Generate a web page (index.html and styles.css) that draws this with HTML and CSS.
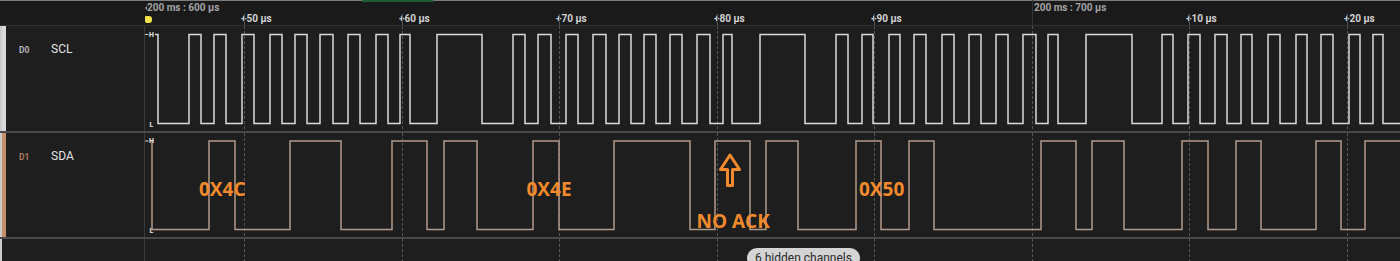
FILE: index.html
```html
<!DOCTYPE html>
<html lang="en">
<head>
  <meta charset="UTF-8" />
  <title>Logic - I2C capture</title>
  <link rel="stylesheet" href="styles.css">
</head>
<body>

<div class="viewer">

  <!-- Time ruler -->
  <div class="ruler-row">
    <div class="ruler-gutter"></div>
    <div class="ruler">
      <span class="tab-accent"></span>
      <span class="mark mark-prev">200 ms : 600 µs</span>
      <span class="cursor-flag"></span>
      <span class="tick" style="left:96px">+50 µs</span>
      <span class="tick" style="left:254px">+60 µs</span>
      <span class="tick" style="left:411px">+70 µs</span>
      <span class="tick" style="left:569px">+80 µs</span>
      <span class="tick" style="left:726px">+90 µs</span>
      <span class="mark mark-line" style="left:887px">200 ms : 700 µs</span>
      <span class="tick" style="left:1041px">+10 µs</span>
      <span class="tick" style="left:1199px">+20 µs</span>
    </div>
  </div>

  <!-- D0 / SCL -->
  <div class="channel channel-scl">
    <div class="channel-label">
      <span class="swatch"></span>
      <span class="ch-id">D0</span>
      <span class="ch-name">SCL</span>
    </div>
    <svg class="trace" width="1255" height="105" viewBox="145 26 1255 105">
      <path class="grid" d="M244.5 26V131M402.5 26V131M559.5 26V131M717.5 26V131M874.5 26V131M1032.5 26V131M1189.5 26V131M1347.5 26V131"/>
      <path class="level-dash" d="M145 34.5H148.5"/>
      <text class="level" x="149" y="36.5">H</text>
      <text class="level" x="149.5" y="126.5">L</text>
      <path class="wave wave-scl" d="M155 34.5H158V123.5H189V34.5H201V123.5H214V34.5H226V123.5H242V34.5H254V123.5H270V34.5H282V123.5H295V34.5H307V123.5H320V34.5H333V123.5H348V34.5H360V123.5H376V34.5H388V123.5H400V34.5H410V123.5H437V34.5H482V123.5H513V34.5H525V123.5H538V34.5H551V123.5H566V34.5H578V123.5H593V34.5H606V123.5H619V34.5H631V123.5H644V34.5H656V123.5H670V34.5H682V123.5H697V34.5H710V123.5H723V34.5H732V123.5H760V34.5H805V123.5H836V34.5H848V123.5H862V34.5H873V123.5H889V34.5H900V123.5H914V34.5H926V123.5H942V34.5H954V123.5H969V34.5H981V123.5H996V34.5H1008V123.5H1023V34.5H1036V123.5H1048V34.5H1058V123.5H1086V34.5H1132V123.5H1162V34.5H1173V123.5H1188V34.5H1200V123.5H1215V34.5H1227V123.5H1241V34.5H1252V123.5H1268V34.5H1280V123.5H1296V34.5H1307V123.5H1321V34.5H1333V123.5H1349V34.5H1360V123.5H1373V34.5H1383V123.5H1400"/>
    </svg>
  </div>

  <!-- D1 / SDA -->
  <div class="channel channel-sda">
    <div class="channel-label">
      <span class="swatch"></span>
      <span class="ch-id">D1</span>
      <span class="ch-name">SDA</span>
    </div>
    <svg class="trace" width="1255" height="104" viewBox="145 133 1255 104">
      <path class="grid" d="M244.5 133V237M402.5 133V237M559.5 133V237M717.5 133V237M874.5 133V237M1032.5 133V237M1189.5 133V237M1347.5 133V237"/>
      <path class="level-dash" d="M145 141H148.5"/>
      <path class="wave wave-sda" d="M152 141V229.5H209V141H235V229.5H290V141H341V229.5H392V141H427V229.5H444V141H477V229.5H533V141H559V229.5H614V141H690V229.5H715V141H750V229.5H766V141H798V229.5H856V141H881V229.5H909V141H934V229.5H1041V141H1076V229.5H1092V141H1124V229.5H1182V141H1208V229.5H1236V141H1261V229.5H1316V141H1341V229.5H1365V141H1400"/>
      <text class="level" x="149" y="142.7">H</text>
      <text class="level" x="149.5" y="232.5">L</text>

      <!-- decoded bytes -->
      <text class="note" x="199" y="195.5">0X4C</text>
      <text class="note" x="526.5" y="195.5">0X4E</text>
      <text class="note" x="859" y="195.5">0X50</text>
      <path class="note-arrow" d="M730 155L739.5 169.5H732.5V185.5H727.5V169.5H720.5Z"/>
      <text class="note" x="696.5" y="227.5">NO ACK</text>
    </svg>
  </div>

  <!-- Hidden channels -->
  <div class="footer-row">
    <div class="footer-gutter"></div>
    <div class="footer-plot">
      <svg class="trace" width="1255" height="22" viewBox="145 239 1255 22">
        <path class="grid" d="M244.5 239V261M402.5 239V261M559.5 239V261M717.5 239V261M874.5 239V261M1032.5 239V261M1189.5 239V261M1347.5 239V261"/>
      </svg>
      <span class="hidden-pill">6 hidden channels</span>
    </div>
  </div>

</div>

</body>
</html>
```

FILE: styles.css
```css
body {
  margin: 0;
  background-color: #1e1e1e;
  font-family: Roboto, 'Liberation Sans', sans-serif;
  overflow: hidden;
}
.viewer {
  width: 1400px;
  height: 261px;
  overflow: hidden;
}

/* ruler */
.ruler-row {
  display: flex;
  height: 24px;
  border-top: 1px solid #7d7d7d;
  border-bottom: 1px solid #313131;
  background-color: #1a1a1a;
}
.ruler-gutter {
  width: 145px;
  flex: none;
}
.ruler {
  position: relative;
  flex: 1;
}
.tab-accent {
  position: absolute;
  top: -1px;
  left: 217px;
  width: 71px;
  height: 2px;
  background: #1f5d35;
}
.mark {
  position: absolute;
  top: 1px;
  font-size: 10px;
  font-weight: 700;
  line-height: 12px;
  color: #a3a3a3;
  white-space: nowrap;
}
.mark-prev {
  left: 2px;
}
.mark-prev::before {
  content: '';
  position: absolute;
  left: -2px;
  top: 4px;
  border-top: 2px solid transparent;
  border-bottom: 2px solid transparent;
  border-right: 2px solid #a3a3a3;
}
.mark-line {
  top: -1px;
  bottom: 0;
  padding: 2px 0 0 1px;
  border-left: 1px solid #333;
}
.cursor-flag {
  position: absolute;
  left: 0;
  top: 15px;
  width: 7px;
  height: 7px;
  background: #f3e24c;
  border-radius: 1px 3px 3px 2px;
}
.tick {
  position: absolute;
  top: 12px;
  bottom: 0;
  font-size: 10px;
  font-weight: 700;
  line-height: 12px;
  color: #d2d2d2;
  white-space: nowrap;
}
.tick::before {
  content: '';
  position: absolute;
  left: 3px;
  top: 1px;
  bottom: 0;
  border-left: 1px dashed #555;
}

/* channels */
.channel {
  display: flex;
  border-bottom: 2px solid #494949;
}
.channel-scl { height: 105px; }
.channel-sda { height: 104px; }
.channel-label {
  width: 145px;
  flex: none;
  box-sizing: border-box;
  display: flex;
  align-items: baseline;
  border-left: 2px solid #cbcbcb;
  border-right: 1px solid #3a3a3a;
  line-height: 14px;
}
.swatch {
  align-self: stretch;
  width: 4px;
  flex: none;
}
.channel-scl .swatch { background: #d9d9d9; }
.channel-sda .swatch { background: #c48f6d; }
.ch-id {
  margin: 16px 0 0 13px;
  width: 32px;
  font-size: 8.5px;
  font-weight: 700;
  color: #b4b4b4;
}
.channel-sda .ch-id { color: #b27a5f; }
.ch-name {
  margin-top: 16px;
  font-size: 12px;
  color: #e2e2e2;
}
.trace {
  display: block;
  flex: none;
}
.grid {
  stroke: #555;
  stroke-width: 1;
  stroke-dasharray: 3 2;
  fill: none;
}
.wave {
  fill: none;
  stroke-width: 1.5;
}
.wave-scl { stroke: #dadada; }
.wave-sda { stroke: #b29b8b; }
.level-dash {
  stroke: #cfcfcf;
  stroke-width: 1;
}
.level {
  font-family: Roboto, sans-serif;
  font-size: 7px;
  font-weight: 700;
  fill: #e6e6e6;
}
.note {
  font-family: 'Open Sans', sans-serif;
  font-size: 19px;
  font-weight: 700;
  fill: #f08a2c;
}
.note-arrow {
  fill: none;
  stroke: #f08a2c;
  stroke-width: 3;
  stroke-linejoin: round;
}

/* footer */
.footer-row {
  display: flex;
  height: 22px;
}
.footer-gutter {
  width: 145px;
  flex: none;
  box-sizing: border-box;
  border-left: 2px solid #cbcbcb;
  border-right: 1px solid #3a3a3a;
}
.footer-plot {
  position: relative;
  flex: 1;
}
.hidden-pill {
  position: absolute;
  left: 602px;
  top: 9px;
  height: 20px;
  padding: 0 8px;
  border-radius: 10px;
  background: #d4d4d4;
  color: #2a2a2a;
  font-size: 12px;
  line-height: 20px;
  white-space: nowrap;
}
```
